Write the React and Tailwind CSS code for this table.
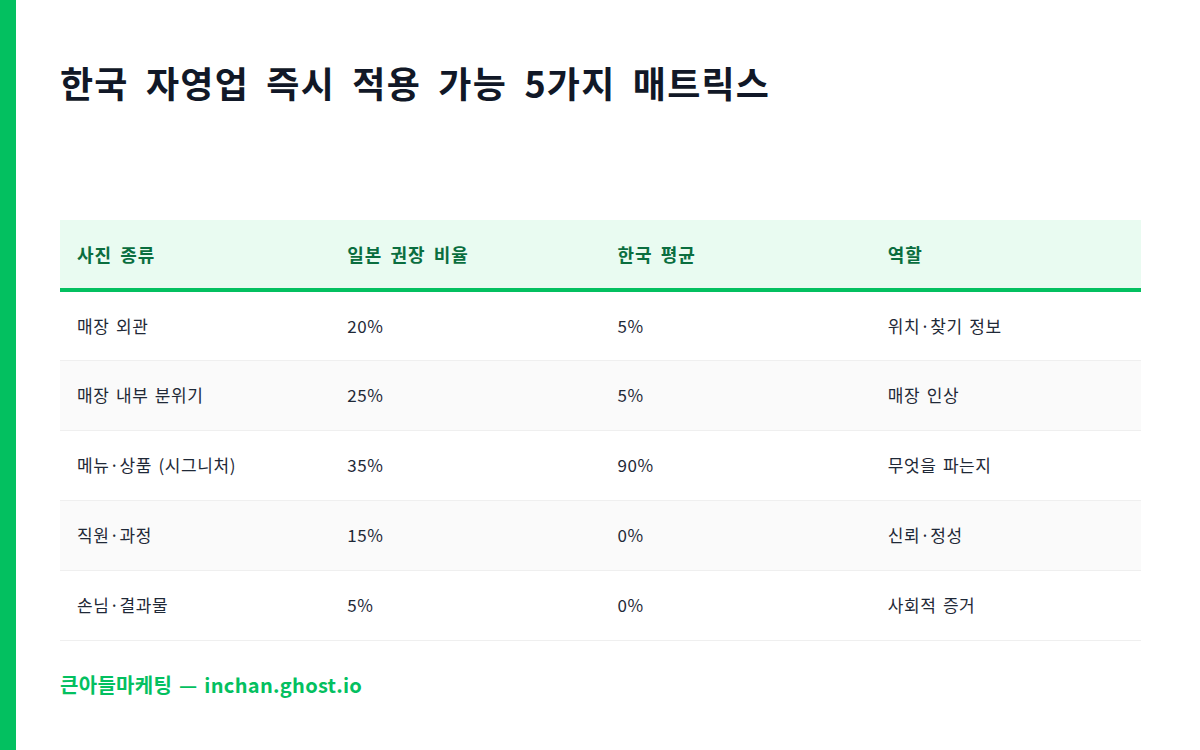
import React from 'react';

const rows = [
  ['매장 외관', '20%', '5%', '위치·찾기 정보'],
  ['매장 내부 분위기', '25%', '5%', '매장 인상'],
  ['메뉴·상품 (시그니처)', '35%', '90%', '무엇을 파는지'],
  ['직원·과정', '15%', '0%', '신뢰·정성'],
  ['손님·결과물', '5%', '0%', '사회적 증거'],
];

const heads = ['사진 종류', '일본 권장 비율', '한국 평균', '역할'];

export default function App() {
  return (
    <div
      className="w-[1200px] h-[750px] bg-white flex overflow-hidden"
      style={{ fontFamily: '"Noto Sans CJK KR", "Noto Sans", sans-serif' }}
    >
      <div className="w-[16px] shrink-0 bg-[#03c060]" />
      <div className="flex-1 pl-[44px] pr-[59px] pt-[55px]">
        <h1 className="text-[36px] leading-[54px] font-bold text-[#111827] tracking-[1.2px] [word-spacing:8px]">
          한국 자영업 즉시 적용 가능 5가지 매트릭스
        </h1>

        <table className="w-full mt-[111px] border-collapse table-fixed">
          <thead>
            <tr className="bg-[#e9fbf1] border-b-4 border-[#03c060]">
              {heads.map((h) => (
                <th
                  key={h}
                  className="h-[70px] text-left px-[17px] text-[18px] font-bold text-[#0a6e3f] tracking-[1px] [word-spacing:3px]"
                >
                  {h}
                </th>
              ))}
            </tr>
          </thead>
          <tbody>
            {rows.map((r, i) => (
              <tr
                key={i}
                className={`border-b border-[#efefef] ${i % 2 === 1 ? 'bg-[#fafafa]' : 'bg-white'}`}
              >
                {r.map((c, j) => (
                  <td
                    key={j}
                    className="h-[70px] px-[17px] text-[17px] text-[#1f2937] font-normal tracking-[0.6px] [word-spacing:2px]"
                  >
                    {c}
                  </td>
                ))}
              </tr>
            ))}
          </tbody>
        </table>

        <div className="mt-[29px] text-[20px] font-bold text-[#03c060] tracking-[0.3px] [word-spacing:2px]">
          큰아들마케팅 — inchan.ghost.io
        </div>
      </div>
    </div>
  );
}
